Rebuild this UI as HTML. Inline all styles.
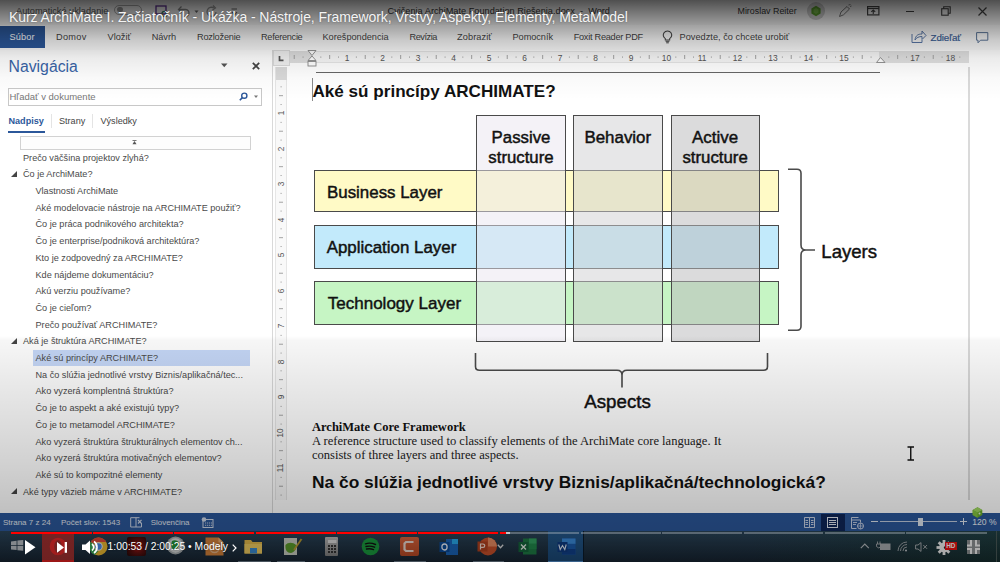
<!DOCTYPE html>
<html><head><meta charset="utf-8">
<style>
*{margin:0;padding:0;box-sizing:border-box}
html,body{width:1000px;height:562px;overflow:hidden;background:#fff}
body{position:relative;font-family:"Liberation Sans",sans-serif;color:#444}
.a{position:absolute}
.t{position:absolute;white-space:nowrap;line-height:1}
svg{position:absolute;overflow:visible}
</style></head><body>
<div class="a" style="left:0px;top:0px;width:1000px;height:25px;background:#f5f5f5"></div>
<div class="t" style="left:16.00px;top:6.71px;font-size:9.2px;color:#555;">Automatické ukladanie</div>
<div class="a" style="left:114px;top:4.5px;width:27.5px;height:10px;border:1px solid #aaa;border-radius:5px"></div>
<div class="a" style="left:117px;top:6.8px;width:5.5px;height:5.5px;background:#999;border-radius:50%"></div>
<svg style="left:155px;top:5px" width="14" height="12"><rect x="1" y="1" width="10" height="8" fill="none" stroke="#5c2d91" stroke-width="1.3"/><circle cx="9.5" cy="9" r="2.6" fill="none" stroke="#3a7a5a" stroke-width="1.2"/></svg>
<svg style="left:177px;top:5px" width="14" height="12"><path d="M2,4.5 H8.5 A3.5,3.5 0 0 1 8.5,11.5 H6" stroke="#888" stroke-width="1.3" fill="none"/><path d="M4.5,1.5 L1.5,4.5 L4.5,7.5" stroke="#888" stroke-width="1.3" fill="none"/></svg>
<svg style="left:194px;top:9.5px" width="5" height="4"><path d="M0.5,0.5 H4.5 L2.5,3 Z" fill="#666"/></svg>
<svg style="left:206px;top:5px" width="12" height="12"><path d="M8,3 A4.5,4.5 0 1 0 10,7" stroke="#999" stroke-width="1.3" fill="none"/><path d="M7,0.5 L9.5,3 L6.5,5" stroke="#999" stroke-width="1.2" fill="none"/></svg>
<svg style="left:231px;top:8px" width="8" height="8"><path d="M0.5,1 H6 M1,4 L3.5,7 L6,4" stroke="#666" stroke-width="1.1" fill="none"/></svg>
<div class="t" style="left:387.50px;top:6.71px;font-size:9.2px;color:#333;">Cvičenia ArchiMate Foundation Riešenia.docx&nbsp; - &nbsp;Word</div>
<div class="t" style="left:737.50px;top:6.97px;font-size:8.9px;color:#333;">Miroslav Reiter</div>
<div class="a" style="left:807px;top:2px;width:18px;height:18px;border-radius:50%;background:radial-gradient(circle,#cfcfcf 55%,#b8b8b8 100%)"></div>
<svg style="left:810px;top:5px" width="12" height="12"><polygon points="6,0.8 10.6,3.4 10.6,8.6 6,11.2 1.4,8.6 1.4,3.4" fill="#5a9c2e"/><polygon points="6,3 8.5,4.5 8.5,7.5 6,9 3.5,7.5 3.5,4.5" fill="#77b84a"/></svg>
<svg style="left:838px;top:4px" width="14" height="14"><path d="M1.5,12.5 L3,8 L9,2.5 L11.5,5 L5.5,10.8 Z" fill="none" stroke="#777" stroke-width="1"/><path d="M10.5,1 L12.5,0.5 M12,2.5 L13.5,2" stroke="#777" stroke-width="0.9"/></svg>
<svg style="left:867px;top:6px" width="13" height="10"><rect x="0.6" y="0.6" width="11.3" height="8.3" fill="none" stroke="#444" stroke-width="1.2"/><path d="M0.6,2.5 H11.9" stroke="#444" stroke-width="1.2"/><path d="M6.25,8 V4 M4.3,5.8 L6.25,3.9 L8.2,5.8" stroke="#444" stroke-width="1.1" fill="none"/></svg>
<div class="a" style="left:905.5px;top:11px;width:8.5px;height:1.2px;background:#444"></div>
<svg style="left:941px;top:6px" width="10" height="10"><rect x="0.7" y="2.7" width="6.5" height="6.5" fill="none" stroke="#444" stroke-width="1.1"/><path d="M2.7,2.7 V0.7 H9.2 V7.2 H7.2" fill="none" stroke="#444" stroke-width="1.1"/></svg>
<svg style="left:977.5px;top:6.5px" width="9" height="9"><path d="M0.5,0.5 L8.5,8.5 M8.5,0.5 L0.5,8.5" stroke="#444" stroke-width="1.2"/></svg>
<div class="a" style="left:0px;top:25px;width:1000px;height:25px;background:#fbfbfb"></div>
<div class="a" style="left:0px;top:25.5px;width:45px;height:22.5px;background:#2b579a"></div>
<div class="t" style="left:9.60px;top:33.41px;font-size:9.2px;color:#fff;letter-spacing:0.1px">Súbor</div>
<div class="t" style="left:56.00px;top:33.31px;font-size:9.2px;color:#444;letter-spacing:0.3px">Domov</div>
<div class="t" style="left:107.50px;top:33.31px;font-size:9.2px;color:#444;letter-spacing:0.016px">Vložiť</div>
<div class="t" style="left:151.70px;top:33.31px;font-size:9.2px;color:#444;letter-spacing:-0.05px">Návrh</div>
<div class="t" style="left:197.00px;top:33.31px;font-size:9.2px;color:#444;letter-spacing:-0.2px">Rozloženie</div>
<div class="t" style="left:261.00px;top:33.31px;font-size:9.2px;color:#444;letter-spacing:-0.3px">Referencie</div>
<div class="t" style="left:322.50px;top:33.31px;font-size:9.2px;color:#444;letter-spacing:-0.02px">Korešpondencia</div>
<div class="t" style="left:409.50px;top:33.31px;font-size:9.2px;color:#444;letter-spacing:-0.45px">Revízia</div>
<div class="t" style="left:457.00px;top:33.31px;font-size:9.2px;color:#444;letter-spacing:0.1px">Zobraziť</div>
<div class="t" style="left:512.50px;top:33.31px;font-size:9.2px;color:#444;letter-spacing:-0.05px">Pomocník</div>
<div class="t" style="left:573.70px;top:33.31px;font-size:9.2px;color:#444;letter-spacing:-0.27px">Foxit Reader PDF</div>
<div class="t" style="left:679.50px;top:33.31px;font-size:9.2px;color:#444;letter-spacing:0.026px">Povedzte, čo chcete urobiť</div>
<svg style="left:661.5px;top:30px" width="11" height="14"><path d="M3.3,8.6 C1.2,7 1,4.5 2,2.8 C3.6,0.4 7.4,0.4 9,2.8 C10,4.5 9.8,7 7.7,8.6 V10 H3.3 Z" fill="none" stroke="#444" stroke-width="1.05"/><path d="M3.6,11.3 H7.4 M4.2,12.8 H6.8" stroke="#444" stroke-width="1"/></svg>
<svg style="left:911px;top:29px" width="16" height="15"><path d="M1,5 V13.5 H11 V11" fill="none" stroke="#5a78a8" stroke-width="1"/><path d="M4,11 C4.5,6.5 7,5 11,5 V2 L15,6.5 L11,10.5 V7.5 C8,7.5 5.5,8.5 4,11 Z" fill="none" stroke="#5a78a8" stroke-width="1"/></svg>
<div class="t" style="left:930.50px;top:32.90px;font-size:9.8px;color:#3a5f98;letter-spacing:-0.1px;-webkit-text-stroke:0.2px #3a5f98">Zdieľať</div>
<svg style="left:976px;top:32px" width="13" height="12"><path d="M0.6,0.6 H11.8 V8.2 H4.5 L2,10.8 V8.2 H0.6 Z" fill="none" stroke="#5a7498" stroke-width="1"/></svg>
<div class="a" style="left:0px;top:50px;width:273px;height:463px;background:#fff;border-right:1px solid #d9d9d9"></div>
<div class="t" style="left:8.50px;top:58.83px;font-size:15.8px;color:#3863a6;">Navigácia</div>
<div class="a" style="left:8px;top:87.5px;width:253.5px;height:18px;border:1px solid #c8c8c8;background:#fff"></div>
<div class="t" style="left:9.50px;top:91.76px;font-size:9.5px;color:#777;">Hľadať v dokumente</div>
<div class="t" style="left:8.50px;top:117.00px;font-size:9.1px;color:#2b579a;font-weight:bold;">Nadpisy</div>
<div class="a" style="left:8px;top:130.5px;width:37px;height:2.3px;background:#2b579a"></div>
<div class="a" style="left:50.5px;top:114px;width:1px;height:14px;background:#e4e4e4"></div>
<div class="t" style="left:59.00px;top:117.00px;font-size:9.1px;color:#444;">Strany</div>
<div class="a" style="left:92px;top:114px;width:1px;height:14px;background:#e4e4e4"></div>
<div class="t" style="left:100.50px;top:117.00px;font-size:9.1px;color:#444;">Výsledky</div>
<div class="a" style="left:20px;top:135.5px;width:230.5px;height:14px;border:1px solid #d2d2d2;background:#fdfdfd"></div>
<svg style="left:132px;top:140px" width="5" height="5"><path d="M0.5,4.2 L2.5,1 L4.5,4.2 Z" fill="#555"/><rect x="0.5" y="0" width="4" height="0.8" fill="#555"/></svg>
<svg style="left:220.5px;top:62.5px" width="7" height="5"><path d="M0,0.5 H6.5 L3.25,4.3 Z" fill="#555"/></svg>
<svg style="left:252px;top:61.5px" width="8" height="8"><path d="M0.8,0.8 L7.2,7.2 M7.2,0.8 L0.8,7.2" stroke="#444" stroke-width="1.7"/></svg>
<svg style="left:239px;top:92px" width="9" height="9"><circle cx="5.3" cy="3.7" r="2.6" fill="none" stroke="#2b579a" stroke-width="1.4"/><path d="M3.4,5.6 L0.8,8.2" stroke="#2b579a" stroke-width="1.6"/></svg>
<svg style="left:254px;top:95px" width="5" height="4"><path d="M0,0.5 H4 L2,3 Z" fill="#777"/></svg>
<div class="t" style="left:23.00px;top:153.65px;font-size:9.15px;color:#4a4a4a;">Prečo väčšina projektov zlyhá?</div>
<svg style="left:11px;top:170.6px" width="7" height="7"><polygon points="6,0 6,6 0,6" fill="#444"/></svg>
<div class="t" style="left:23.00px;top:170.35px;font-size:9.15px;color:#4a4a4a;">Čo je ArchiMate?</div>
<div class="t" style="left:35.50px;top:187.05px;font-size:9.15px;color:#4a4a4a;">Vlastnosti ArchiMate</div>
<div class="t" style="left:35.50px;top:203.75px;font-size:9.15px;color:#4a4a4a;">Aké modelovacie nástroje na ARCHIMATE použiť?</div>
<div class="t" style="left:35.50px;top:220.45px;font-size:9.15px;color:#4a4a4a;">Čo je práca podnikového architekta?</div>
<div class="t" style="left:35.50px;top:237.15px;font-size:9.15px;color:#4a4a4a;">Čo je enterprise/podniková architektúra?</div>
<div class="t" style="left:35.50px;top:253.85px;font-size:9.15px;color:#4a4a4a;">Kto je zodpovedný za ARCHIMATE?</div>
<div class="t" style="left:35.50px;top:270.55px;font-size:9.15px;color:#4a4a4a;">Kde nájdeme dokumentáciu?</div>
<div class="t" style="left:35.50px;top:287.25px;font-size:9.15px;color:#4a4a4a;">Akú verziu používame?</div>
<div class="t" style="left:35.50px;top:303.95px;font-size:9.15px;color:#4a4a4a;">Čo je cieľom?</div>
<div class="t" style="left:35.50px;top:320.65px;font-size:9.15px;color:#4a4a4a;">Prečo používať ARCHIMATE?</div>
<svg style="left:11px;top:337.6px" width="7" height="7"><polygon points="6,0 6,6 0,6" fill="#444"/></svg>
<div class="t" style="left:23.00px;top:337.35px;font-size:9.15px;color:#4a4a4a;">Aká je štruktúra ARCHIMATE?</div>
<div class="a" style="left:33px;top:350.09999999999997px;width:216.6px;height:15.7px;background:#c6d8f8"></div>
<div class="t" style="left:35.50px;top:354.05px;font-size:9.15px;color:#4a4a4a;">Aké sú princípy ARCHIMATE?</div>
<div class="t" style="left:35.50px;top:370.75px;font-size:9.15px;color:#4a4a4a;">Na čo slúžia jednotlivé vrstvy Biznis/aplikačná/tec...</div>
<div class="t" style="left:35.50px;top:387.45px;font-size:9.15px;color:#4a4a4a;">Ako vyzerá komplentná štruktúra?</div>
<div class="t" style="left:35.50px;top:404.15px;font-size:9.15px;color:#4a4a4a;">Čo je to aspekt a aké existujú typy?</div>
<div class="t" style="left:35.50px;top:420.85px;font-size:9.15px;color:#4a4a4a;">Čo je to metamodel ARCHIMATE?</div>
<div class="t" style="left:35.50px;top:437.55px;font-size:9.15px;color:#4a4a4a;">Ako vyzerá štruktúra štrukturálnych elementov ch...</div>
<div class="t" style="left:35.50px;top:454.25px;font-size:9.15px;color:#4a4a4a;">Ako vyzerá štruktúra motivačných elementov?</div>
<div class="t" style="left:35.50px;top:470.95px;font-size:9.15px;color:#4a4a4a;">Aké sú to kompozitné elementy</div>
<svg style="left:11px;top:487.9px" width="7" height="7"><polygon points="6,0 6,6 0,6" fill="#444"/></svg>
<div class="t" style="left:23.00px;top:487.65px;font-size:9.15px;color:#4a4a4a;">Aké typy väzieb máme v ARCHIMATE?</div>
<div class="a" style="left:274px;top:50px;width:726px;height:463px;background:#fff"></div>
<div class="a" style="left:968.2px;top:67px;width:1.4px;height:433px;background:#dadada"></div>
<div class="a" style="left:272.8px;top:49.6px;width:17.1px;height:16px;background:#f0f0f0;border:1px solid #dadada"></div>
<svg style="left:278px;top:53px" width="8" height="8"><path d="M1.5,3 V7.3 H5.5" stroke="#555" stroke-width="1.7" fill="none"/></svg>
<div class="a" style="left:290px;top:51px;width:679px;height:11.6px;background:#f7f7f7;border-top:1px solid #e6e6e6;border-bottom:1px solid #e6e6e6"></div>
<div class="a" style="left:290px;top:51px;width:21.5px;height:11.6px;background:#dedede"></div>
<div class="a" style="left:878.5px;top:51px;width:90.5px;height:11.6px;background:#e0e0e0"></div>
<svg style="left:290px;top:51px" width="679" height="12"><rect x="3.75" y="4" width="0.9" height="4" fill="#9a9a9a"/><rect x="12.62" y="5.5" width="0.9" height="1.2" fill="#9a9a9a"/><rect x="30.38" y="5.5" width="0.9" height="1.2" fill="#9a9a9a"/><rect x="39.25" y="4" width="0.9" height="4" fill="#9a9a9a"/><rect x="48.12" y="5.5" width="0.9" height="1.2" fill="#9a9a9a"/><rect x="65.88" y="5.5" width="0.9" height="1.2" fill="#9a9a9a"/><rect x="74.75" y="4" width="0.9" height="4" fill="#9a9a9a"/><rect x="83.62" y="5.5" width="0.9" height="1.2" fill="#9a9a9a"/><rect x="101.38" y="5.5" width="0.9" height="1.2" fill="#9a9a9a"/><rect x="110.25" y="4" width="0.9" height="4" fill="#9a9a9a"/><rect x="119.12" y="5.5" width="0.9" height="1.2" fill="#9a9a9a"/><rect x="136.88" y="5.5" width="0.9" height="1.2" fill="#9a9a9a"/><rect x="145.75" y="4" width="0.9" height="4" fill="#9a9a9a"/><rect x="154.62" y="5.5" width="0.9" height="1.2" fill="#9a9a9a"/><rect x="172.38" y="5.5" width="0.9" height="1.2" fill="#9a9a9a"/><rect x="181.25" y="4" width="0.9" height="4" fill="#9a9a9a"/><rect x="190.12" y="5.5" width="0.9" height="1.2" fill="#9a9a9a"/><rect x="207.88" y="5.5" width="0.9" height="1.2" fill="#9a9a9a"/><rect x="216.75" y="4" width="0.9" height="4" fill="#9a9a9a"/><rect x="225.62" y="5.5" width="0.9" height="1.2" fill="#9a9a9a"/><rect x="243.38" y="5.5" width="0.9" height="1.2" fill="#9a9a9a"/><rect x="252.25" y="4" width="0.9" height="4" fill="#9a9a9a"/><rect x="261.12" y="5.5" width="0.9" height="1.2" fill="#9a9a9a"/><rect x="278.88" y="5.5" width="0.9" height="1.2" fill="#9a9a9a"/><rect x="287.75" y="4" width="0.9" height="4" fill="#9a9a9a"/><rect x="296.62" y="5.5" width="0.9" height="1.2" fill="#9a9a9a"/><rect x="314.38" y="5.5" width="0.9" height="1.2" fill="#9a9a9a"/><rect x="323.25" y="4" width="0.9" height="4" fill="#9a9a9a"/><rect x="332.12" y="5.5" width="0.9" height="1.2" fill="#9a9a9a"/><rect x="349.88" y="5.5" width="0.9" height="1.2" fill="#9a9a9a"/><rect x="358.75" y="4" width="0.9" height="4" fill="#9a9a9a"/><rect x="367.62" y="5.5" width="0.9" height="1.2" fill="#9a9a9a"/><rect x="385.38" y="5.5" width="0.9" height="1.2" fill="#9a9a9a"/><rect x="394.25" y="4" width="0.9" height="4" fill="#9a9a9a"/><rect x="403.12" y="5.5" width="0.9" height="1.2" fill="#9a9a9a"/><rect x="420.88" y="5.5" width="0.9" height="1.2" fill="#9a9a9a"/><rect x="429.75" y="4" width="0.9" height="4" fill="#9a9a9a"/><rect x="438.62" y="5.5" width="0.9" height="1.2" fill="#9a9a9a"/><rect x="456.38" y="5.5" width="0.9" height="1.2" fill="#9a9a9a"/><rect x="465.25" y="4" width="0.9" height="4" fill="#9a9a9a"/><rect x="474.12" y="5.5" width="0.9" height="1.2" fill="#9a9a9a"/><rect x="491.88" y="5.5" width="0.9" height="1.2" fill="#9a9a9a"/><rect x="500.75" y="4" width="0.9" height="4" fill="#9a9a9a"/><rect x="509.62" y="5.5" width="0.9" height="1.2" fill="#9a9a9a"/><rect x="527.38" y="5.5" width="0.9" height="1.2" fill="#9a9a9a"/><rect x="536.25" y="4" width="0.9" height="4" fill="#9a9a9a"/><rect x="545.12" y="5.5" width="0.9" height="1.2" fill="#9a9a9a"/><rect x="562.88" y="5.5" width="0.9" height="1.2" fill="#9a9a9a"/><rect x="571.75" y="4" width="0.9" height="4" fill="#9a9a9a"/><rect x="580.62" y="5.5" width="0.9" height="1.2" fill="#9a9a9a"/><rect x="598.38" y="5.5" width="0.9" height="1.2" fill="#9a9a9a"/><rect x="607.25" y="4" width="0.9" height="4" fill="#9a9a9a"/><rect x="616.12" y="5.5" width="0.9" height="1.2" fill="#9a9a9a"/><rect x="633.88" y="5.5" width="0.9" height="1.2" fill="#9a9a9a"/><rect x="642.75" y="4" width="0.9" height="4" fill="#9a9a9a"/><rect x="651.62" y="5.5" width="0.9" height="1.2" fill="#9a9a9a"/><rect x="669.38" y="5.5" width="0.9" height="1.2" fill="#9a9a9a"/></svg>
<div class="t" style="left:344.50px;top:54.09px;font-size:8.4px;color:#555;width:5.0px;text-align:center">1</div>
<div class="t" style="left:380.00px;top:54.09px;font-size:8.4px;color:#555;width:5.0px;text-align:center">2</div>
<div class="t" style="left:415.50px;top:54.09px;font-size:8.4px;color:#555;width:5.0px;text-align:center">3</div>
<div class="t" style="left:451.00px;top:54.09px;font-size:8.4px;color:#555;width:5.0px;text-align:center">4</div>
<div class="t" style="left:486.50px;top:54.09px;font-size:8.4px;color:#555;width:5.0px;text-align:center">5</div>
<div class="t" style="left:522.00px;top:54.09px;font-size:8.4px;color:#555;width:5.0px;text-align:center">6</div>
<div class="t" style="left:557.50px;top:54.09px;font-size:8.4px;color:#555;width:5.0px;text-align:center">7</div>
<div class="t" style="left:593.00px;top:54.09px;font-size:8.4px;color:#555;width:5.0px;text-align:center">8</div>
<div class="t" style="left:628.50px;top:54.09px;font-size:8.4px;color:#555;width:5.0px;text-align:center">9</div>
<div class="t" style="left:661.50px;top:54.09px;font-size:8.4px;color:#555;width:10.0px;text-align:center">10</div>
<div class="t" style="left:697.00px;top:54.09px;font-size:8.4px;color:#555;width:10.0px;text-align:center">11</div>
<div class="t" style="left:732.50px;top:54.09px;font-size:8.4px;color:#555;width:10.0px;text-align:center">12</div>
<div class="t" style="left:768.00px;top:54.09px;font-size:8.4px;color:#555;width:10.0px;text-align:center">13</div>
<div class="t" style="left:803.50px;top:54.09px;font-size:8.4px;color:#555;width:10.0px;text-align:center">14</div>
<div class="t" style="left:839.00px;top:54.09px;font-size:8.4px;color:#555;width:10.0px;text-align:center">15</div>
<div class="t" style="left:910.00px;top:54.09px;font-size:8.4px;color:#555;width:10.0px;text-align:center">17</div>
<div class="t" style="left:945.50px;top:54.09px;font-size:8.4px;color:#555;width:10.0px;text-align:center">18</div>
<svg style="left:307px;top:49.5px" width="10" height="18"><path d="M1,0.5 H9 L5,5.5 Z" fill="#fff" stroke="#888" stroke-width="0.9"/><path d="M5,6 L9,10.5 H1 Z" fill="#fff" stroke="#888" stroke-width="0.9"/><rect x="1" y="11.5" width="8" height="4.5" fill="#fff" stroke="#888" stroke-width="0.9"/></svg>
<svg style="left:876px;top:57px" width="10" height="6"><path d="M4.5,0.5 L9,5.5 H0.5 Z" fill="#fff" stroke="#888" stroke-width="0.9"/></svg>
<div class="a" style="left:274.7px;top:67px;width:12.3px;height:433px;background:#f9f9f9;border-left:1px solid #e6e6e6;border-right:1px solid #e6e6e6"></div>
<div class="a" style="left:275.5px;top:67px;width:11px;height:12.5px;background:#d9d9d9"></div>
<svg style="left:275px;top:67px" width="12" height="433"><rect x="5.5" y="19.38" width="1.2" height="0.9" fill="#9a9a9a"/><rect x="4" y="28.25" width="4" height="0.9" fill="#9a9a9a"/><rect x="5.5" y="37.12" width="1.2" height="0.9" fill="#9a9a9a"/><rect x="5.5" y="54.88" width="1.2" height="0.9" fill="#9a9a9a"/><rect x="4" y="63.75" width="4" height="0.9" fill="#9a9a9a"/><rect x="5.5" y="72.62" width="1.2" height="0.9" fill="#9a9a9a"/><rect x="5.5" y="90.38" width="1.2" height="0.9" fill="#9a9a9a"/><rect x="4" y="99.25" width="4" height="0.9" fill="#9a9a9a"/><rect x="5.5" y="108.12" width="1.2" height="0.9" fill="#9a9a9a"/><rect x="5.5" y="125.88" width="1.2" height="0.9" fill="#9a9a9a"/><rect x="4" y="134.75" width="4" height="0.9" fill="#9a9a9a"/><rect x="5.5" y="143.62" width="1.2" height="0.9" fill="#9a9a9a"/><rect x="5.5" y="161.38" width="1.2" height="0.9" fill="#9a9a9a"/><rect x="4" y="170.25" width="4" height="0.9" fill="#9a9a9a"/><rect x="5.5" y="179.12" width="1.2" height="0.9" fill="#9a9a9a"/><rect x="5.5" y="196.88" width="1.2" height="0.9" fill="#9a9a9a"/><rect x="4" y="205.75" width="4" height="0.9" fill="#9a9a9a"/><rect x="5.5" y="214.62" width="1.2" height="0.9" fill="#9a9a9a"/><rect x="5.5" y="232.38" width="1.2" height="0.9" fill="#9a9a9a"/><rect x="4" y="241.25" width="4" height="0.9" fill="#9a9a9a"/><rect x="5.5" y="250.12" width="1.2" height="0.9" fill="#9a9a9a"/><rect x="5.5" y="267.88" width="1.2" height="0.9" fill="#9a9a9a"/><rect x="4" y="276.75" width="4" height="0.9" fill="#9a9a9a"/><rect x="5.5" y="285.62" width="1.2" height="0.9" fill="#9a9a9a"/><rect x="5.5" y="303.38" width="1.2" height="0.9" fill="#9a9a9a"/><rect x="4" y="312.25" width="4" height="0.9" fill="#9a9a9a"/><rect x="5.5" y="321.12" width="1.2" height="0.9" fill="#9a9a9a"/><rect x="5.5" y="338.88" width="1.2" height="0.9" fill="#9a9a9a"/><rect x="4" y="347.75" width="4" height="0.9" fill="#9a9a9a"/><rect x="5.5" y="356.62" width="1.2" height="0.9" fill="#9a9a9a"/><rect x="5.5" y="374.38" width="1.2" height="0.9" fill="#9a9a9a"/><rect x="4" y="383.25" width="4" height="0.9" fill="#9a9a9a"/><rect x="5.5" y="392.12" width="1.2" height="0.9" fill="#9a9a9a"/><rect x="5.5" y="409.88" width="1.2" height="0.9" fill="#9a9a9a"/><rect x="4" y="418.75" width="4" height="0.9" fill="#9a9a9a"/><rect x="5.5" y="427.62" width="1.2" height="0.9" fill="#9a9a9a"/></svg>
<div class="t" style="left:278.50px;top:109.00px;width:5.0px;height:8px;text-align:center;font-size:8.2px;color:#555;transform:rotate(-90deg)">1</div>
<div class="t" style="left:278.50px;top:144.50px;width:5.0px;height:8px;text-align:center;font-size:8.2px;color:#555;transform:rotate(-90deg)">2</div>
<div class="t" style="left:278.50px;top:180.00px;width:5.0px;height:8px;text-align:center;font-size:8.2px;color:#555;transform:rotate(-90deg)">3</div>
<div class="t" style="left:278.50px;top:215.50px;width:5.0px;height:8px;text-align:center;font-size:8.2px;color:#555;transform:rotate(-90deg)">4</div>
<div class="t" style="left:278.50px;top:251.00px;width:5.0px;height:8px;text-align:center;font-size:8.2px;color:#555;transform:rotate(-90deg)">5</div>
<div class="t" style="left:278.50px;top:286.50px;width:5.0px;height:8px;text-align:center;font-size:8.2px;color:#555;transform:rotate(-90deg)">6</div>
<div class="t" style="left:278.50px;top:322.00px;width:5.0px;height:8px;text-align:center;font-size:8.2px;color:#555;transform:rotate(-90deg)">7</div>
<div class="t" style="left:278.50px;top:357.50px;width:5.0px;height:8px;text-align:center;font-size:8.2px;color:#555;transform:rotate(-90deg)">8</div>
<div class="t" style="left:278.50px;top:393.00px;width:5.0px;height:8px;text-align:center;font-size:8.2px;color:#555;transform:rotate(-90deg)">9</div>
<div class="t" style="left:276.00px;top:428.50px;width:10.0px;height:8px;text-align:center;font-size:8.2px;color:#555;transform:rotate(-90deg)">10</div>
<div class="t" style="left:276.00px;top:464.00px;width:10.0px;height:8px;text-align:center;font-size:8.2px;color:#555;transform:rotate(-90deg)">11</div>
<div class="a" style="left:316px;top:71.8px;width:564px;height:1px;background:#666"></div>
<div class="a" style="left:311.6px;top:78px;width:1.1px;height:23px;background:#8a8a8a"></div>
<div class="t" style="left:312.50px;top:82.52px;font-size:17.1px;color:#111;font-weight:bold;">Aké sú princípy ARCHIMATE?</div>
<div class="a" style="left:314.3px;top:169.6px;width:464.4px;height:42.80000000000001px;background:#fffac6;border:1px solid #4a4a4a"></div>
<div class="a" style="left:314.3px;top:225.4px;width:464.4px;height:43.400000000000006px;background:#c2eafb;border:1px solid #4a4a4a"></div>
<div class="a" style="left:314.3px;top:281.2px;width:464.4px;height:43.80000000000001px;background:#c6f5c4;border:1px solid #4a4a4a"></div>
<div class="a" style="left:476.3px;top:115px;width:89.49999999999994px;height:226.7px;background:rgba(233,229,239,0.5);border:1px solid #4a4a4a"></div>
<div class="a" style="left:573px;top:115px;width:89.70000000000005px;height:226.7px;background:rgba(208,208,210,0.5);border:1px solid #4a4a4a"></div>
<div class="a" style="left:670.6px;top:115px;width:89.10000000000002px;height:226.7px;background:rgba(186,186,188,0.52);border:1px solid #4a4a4a"></div>
<div class="t" style="left:327.00px;top:184.99px;font-size:16.9px;color:#111;-webkit-text-stroke:0.45px #111">Business Layer</div>
<div class="t" style="left:326.70px;top:239.69px;font-size:16.9px;color:#111;-webkit-text-stroke:0.45px #111">Application Layer</div>
<div class="t" style="left:327.80px;top:295.41px;font-size:17.0px;color:#111;-webkit-text-stroke:0.45px #111">Technology Layer</div>
<div class="t" style="left:461.00px;top:130.08px;width:120px;text-align:center;font-size:16.8px;color:#111;-webkit-text-stroke:0.45px #111">Passive</div>
<div class="t" style="left:461.00px;top:149.58px;width:120px;text-align:center;font-size:16.8px;color:#111;-webkit-text-stroke:0.45px #111">structure</div>
<div class="t" style="left:557.80px;top:129.99px;width:120px;text-align:center;font-size:16.9px;color:#111;-webkit-text-stroke:0.45px #111">Behavior</div>
<div class="t" style="left:655.10px;top:129.99px;width:120px;text-align:center;font-size:16.9px;color:#111;-webkit-text-stroke:0.45px #111">Active</div>
<div class="t" style="left:655.10px;top:149.58px;width:120px;text-align:center;font-size:16.8px;color:#111;-webkit-text-stroke:0.45px #111">structure</div>
<svg style="left:780px;top:160px" width="50" height="180"><path d="M8,9.2 H17 Q21,9.2 21,13.2 V85 Q21,90 26,90 H35 M26,90 Q21,90 21,95 V166.3 Q21,170.3 17,170.3 H8" stroke="#4a4a4a" stroke-width="1.6" fill="none"/></svg>
<div class="t" style="left:821.30px;top:242.66px;font-size:18.6px;color:#111;-webkit-text-stroke:0.45px #111">Layers</div>
<svg style="left:470px;top:345px" width="310" height="50"><path d="M5.5,8 V21.5 Q5.5,25.3 9.5,25.3 H147 Q152,25.3 152,30 V42.5 M152,30 Q152,25.3 157,25.3 H293.5 Q297.5,25.3 297.5,21.5 V8" stroke="#4a4a4a" stroke-width="1.6" fill="none"/></svg>
<div class="t" style="left:584.30px;top:393.47px;font-size:18.7px;color:#111;-webkit-text-stroke:0.45px #111">Aspects</div>
<div class="t" style="left:312.00px;top:420.53px;font-size:12.5px;color:#111;font-weight:bold;font-family:'Liberation Serif',serif;">ArchiMate Core Framework</div>
<div class="t" style="left:312.00px;top:434.89px;font-size:12.55px;color:#222;font-family:'Liberation Serif',serif;">A reference structure used to classify elements of the ArchiMate core language. It</div>
<div class="t" style="left:312.00px;top:449.09px;font-size:12.55px;color:#222;font-family:'Liberation Serif',serif;">consists of three layers and three aspects.</div>
<div class="t" style="left:312.00px;top:474.31px;font-size:17.35px;color:#111;font-weight:bold;">Na čo slúžia jednotlivé vrstvy Biznis/aplikačná/technologická?</div>
<svg style="left:906px;top:446px" width="10" height="16"><path d="M1.5,1 H8 M4.75,1 V14 M1.5,14 H8" stroke="#111" stroke-width="1.4" fill="none"/></svg>
<div class="a" style="left:0px;top:513px;width:1000px;height:18px;background:#2b579a"></div>
<div class="t" style="left:3.00px;top:518.83px;font-size:8.0px;color:#e6ecf5;">Strana 7 z 24</div>
<div class="t" style="left:61.00px;top:518.83px;font-size:8.0px;color:#e6ecf5;">Počet slov: 1543</div>
<svg style="left:129.5px;top:516.5px" width="13" height="11"><path d="M0.7,0.7 H6 V10 H0.7 Z M6,0.7 H9.5 M6,10 H11.5 V6" fill="none" stroke="#cfd8e8" stroke-width="1"/><path d="M8,3 L11.5,6.5 M11.5,3 L8,6.5" stroke="#cfd8e8" stroke-width="1.1"/></svg>
<div class="t" style="left:150.70px;top:518.87px;font-size:7.95px;color:#e6ecf5;">Slovenčina</div>
<svg style="left:200.5px;top:516.5px" width="13" height="11"><rect x="2" y="2.5" width="10" height="8" fill="none" stroke="#cfd8e8" stroke-width="1"/><circle cx="3" cy="2.5" r="2.3" fill="#cfd8e8"/><path d="M4,6 H11 M4,8.3 H11" stroke="#cfd8e8" stroke-width="0.9" stroke-dasharray="1.2 0.8"/></svg>
<div class="a" style="left:821px;top:513.8px;width:24px;height:16.8px;background:#0f2658"></div>
<svg style="left:804px;top:517px" width="12" height="11"><path d="M0.5,0.5 H5.5 V10.5 H0.5 Z M5.5,0.5 H10.5 V10.5 H5.5" fill="none" stroke="#c9d3e6" stroke-width="1"/><path d="M1.5,3.5 H4 M1.5,5.5 H4 M1.5,7.5 H4 M7,3.5 H9.5 M7,5.5 H9.5 M7,7.5 H9.5" stroke="#c9d3e6" stroke-width="1"/></svg>
<svg style="left:827px;top:517px" width="12" height="12"><rect x="0.5" y="0.5" width="10" height="10" fill="none" stroke="#e3e9f3" stroke-width="1"/><path d="M2,3.5 H9 M2,5.5 H9 M2,7.5 H9" stroke="#e3e9f3" stroke-width="1"/></svg>
<svg style="left:851px;top:517px" width="13" height="12"><path d="M7.5,0.5 H0.5 V11.5 H5.5 M0.5,3 H9.5 V5.5" fill="none" stroke="#c9d3e6" stroke-width="1"/><path d="M2,5.5 H6 M2,7.5 H5" stroke="#c9d3e6" stroke-width="0.9"/><circle cx="9.5" cy="9" r="3" fill="none" stroke="#c9d3e6" stroke-width="1"/><path d="M6.5,9 H12.5 M9.5,6 V12" stroke="#c9d3e6" stroke-width="0.7"/></svg>
<div class="a" style="left:871px;top:520.6px;width:6.5px;height:1.8px;background:#dfe6f0"></div>
<div class="a" style="left:880.3px;top:520.8px;width:76.7px;height:1.5px;background:#c2cde0"></div>
<div class="a" style="left:917.7px;top:517.6px;width:5.7px;height:8.8px;background:#dfe6f0"></div>
<div class="a" style="left:960px;top:520.8px;width:6.5px;height:1.5px;background:#e3e9f3"></div>
<div class="a" style="left:962.5px;top:518.3px;width:1.5px;height:6.5px;background:#e3e9f3"></div>
<div class="t" style="left:972.30px;top:518.12px;font-size:8.6px;color:#eef2f8;">120 %</div>
<svg style="left:972px;top:507px" width="11" height="11"><polygon points="5.5,0.3 10.3,3 10.3,8 5.5,10.7 0.7,8 0.7,3" fill="#6aae2a"/><polygon points="5.5,0.3 10.3,3 5.5,5.6 0.7,3" fill="#a0d860"/><polygon points="0.7,3 5.5,5.6 5.5,10.7 0.7,8" fill="#84c440"/><circle cx="7.5" cy="6.5" r="1" fill="#e8f0e0"/></svg>
<div class="a" style="left:0px;top:531px;width:1000px;height:31px;background:linear-gradient(90deg,rgba(0,0,0,0) 75%,rgba(20,60,40,0.4) 100%),linear-gradient(#2a4459,#162330)"></div>
<div class="a" style="left:238px;top:560.5px;width:33px;height:1.5px;background:#6a7a88"></div>
<div class="a" style="left:277px;top:560.5px;width:28px;height:1.5px;background:#6a7a88"></div>
<div class="a" style="left:394px;top:560.5px;width:32px;height:1.5px;background:#6a7a88"></div>
<div class="a" style="left:473px;top:560.5px;width:31px;height:1.5px;background:#6a7a88"></div>
<div class="a" style="left:548px;top:560.5px;width:35px;height:1.5px;background:#8ab0d8"></div>
<div class="a" style="left:42.3px;top:534px;width:31.5px;height:28px;background:#a03030"></div>
<div class="a" style="left:42.3px;top:560.3px;width:31.5px;height:1.7px;background:#e02020"></div>
<svg style="left:49px;top:537px" width="18" height="19"><ellipse cx="9" cy="9.5" rx="8.3" ry="8.8" fill="#e42a2a"/><ellipse cx="9" cy="9.5" rx="3.8" ry="6.4" fill="#a03030"/></svg>
<svg style="left:11.4px;top:539.8px" width="13" height="11"><path d="M0,1.4 L5.6,0.7 V5 H0 Z M6.4,0.6 L12.2,0 V5 H6.4 Z M0,5.8 H5.6 V10 L0,9.4 Z M6.4,5.8 H12.2 V10.8 L6.4,10.2 Z" fill="#b8bec4"/></svg>
<svg style="left:89px;top:537px" width="19" height="19"><circle cx="9.5" cy="9.5" r="9" fill="#eab830"/><path d="M9.5,0.5 A9,9 0 0 1 17.3,5 H9.5 A4.5,4.5 0 0 0 5.6,7.3 L1.7,5 A9,9 0 0 1 9.5,0.5 Z" fill="#e04838"/><path d="M1.7,5 L5.6,7.3 A4.5,4.5 0 0 0 9.5,14 L5.6,18 A9,9 0 0 1 1.7,5 Z" fill="#3aaa58"/><circle cx="9.5" cy="9.5" r="4.2" fill="#f0f0f0"/><circle cx="9.5" cy="9.5" r="3.2" fill="#4a8ae8"/></svg>
<div class="a" style="left:127px;top:537px;width:18.6px;height:18.6px;background:radial-gradient(circle at 55% 50%,#c02020 0%,#601010 45%,#200808 100%);border-radius:2px"></div>
<svg style="left:166px;top:536px" width="19" height="19"><circle cx="9.5" cy="9.5" r="9" fill="#a8aeb0"/><circle cx="9.5" cy="9.5" r="7.2" fill="#d8dcdc"/><path d="M6,5 C8,3.5 12,4 13,7 C13.5,9.5 12.5,12 10,13 C8,13.8 6,13 5.5,11 C5,9 5.5,6.5 6,5 Z" fill="#2a9a3a"/></svg>
<svg style="left:205px;top:537px" width="19" height="19"><path d="M0.5,0.5 H13.5 L18.5,5.5 V18.5 H0.5 Z" fill="#d4823a"/><path d="M13.5,0.5 V5.5 H18.5 Z" fill="#f0b070"/><circle cx="9.5" cy="11" r="4.5" fill="none" stroke="#e8c8a8" stroke-width="1.5" opacity="0.7"/></svg>
<svg style="left:244px;top:539px" width="19" height="15"><path d="M0.5,1 H7 L8.5,3 H18 V14.5 H0.5 Z" fill="#e2b84a"/><rect x="0.5" y="5" width="17.5" height="9.5" fill="#f0cc60"/><rect x="6" y="9" width="7" height="5.5" fill="#3a8ad0"/></svg>
<svg style="left:283px;top:537px" width="20" height="19"><path d="M1,1 H14 V18 H1 Z" fill="#c8ccc0"/><path d="M2.5,8 C5,5 10,5 13,8 C14,11 12,15 8,16 C4,16 2,13 2.5,8 Z" fill="#5a9a2a"/><path d="M11,13 L18.5,2" stroke="#b89a30" stroke-width="1.8"/></svg>
<div class="a" style="left:325px;top:537px;width:13.4px;height:19px;background:linear-gradient(#b8b8b8,#808080);border-radius:1px"></div>
<svg style="left:326.5px;top:538.5px" width="11" height="16"><rect x="1" y="1" width="8.5" height="3" fill="#dadada"/><rect x="1" y="6" width="2" height="2" fill="#333"/><rect x="4" y="6" width="2" height="2" fill="#333"/><rect x="7" y="6" width="2" height="2" fill="#333"/><rect x="1" y="9" width="2" height="2" fill="#333"/><rect x="4" y="9" width="2" height="2" fill="#333"/><rect x="7" y="9" width="2" height="2" fill="#333"/><rect x="1" y="12" width="2" height="2" fill="#333"/><rect x="4" y="12" width="2" height="2" fill="#333"/><rect x="7" y="12" width="2" height="2" fill="#333"/></svg>
<svg style="left:361px;top:537px" width="19" height="19"><circle cx="9.5" cy="9.5" r="8.8" fill="#1a9a3e"/><path d="M4.5,6.8 C7.5,5.8 11,6 14.5,7.5 M5,9.5 C7.8,8.8 10.6,9 13.6,10.2 M5.5,12 C8,11.5 10.2,11.6 12.5,12.6" stroke="#111" stroke-width="1.4" fill="none" stroke-linecap="round"/></svg>
<div class="a" style="left:400px;top:537px;width:19px;height:19px;background:linear-gradient(#d8623a,#b84a26);border-radius:2px"></div>
<svg style="left:403px;top:540px" width="13" height="13"><path d="M10.5,2 H3 L1.5,3.5 V9.5 L3,11 H10.5" stroke="#e8d8d0" stroke-width="2.2" fill="none"/></svg>
<svg style="left:439px;top:538px" width="20" height="18"><rect x="7" y="1" width="12" height="16" fill="#1a64b8"/><rect x="13" y="1" width="6" height="5" fill="#28a8ea"/><rect x="0.5" y="4" width="10" height="10" fill="#0a4a98"/><ellipse cx="5.5" cy="9" rx="2.6" ry="3" fill="none" stroke="#e8eef8" stroke-width="1.3"/></svg>
<svg style="left:477px;top:537px" width="21" height="20"><circle cx="11" cy="9.5" r="9" fill="#c8502a"/><path d="M11,0.5 A9,9 0 0 1 20,9.5 H11 Z" fill="#e88a60"/><rect x="0.5" y="4.5" width="10" height="10" fill="#b0401e"/><path d="M3.5,12.5 V7 H6 A1.7,1.7 0 0 1 6,10.4 H3.5" stroke="#f4dcd0" stroke-width="1.2" fill="none"/></svg>
<svg style="left:497px;top:543.5px" width="7" height="5"><path d="M0.8,0.8 L3.5,3.8 L6.2,0.8" stroke="#ddd" stroke-width="1.3" fill="none"/></svg>
<svg style="left:518px;top:538px" width="19" height="17"><rect x="5" y="0.5" width="13.5" height="16" fill="#1e7a44"/><rect x="11" y="0.5" width="7.5" height="5.3" fill="#32a060"/><rect x="11" y="5.8" width="7.5" height="5.3" fill="#21874b"/><rect x="0.5" y="4" width="10" height="10" fill="#14643a"/><path d="M3,6.5 L8,11.5 M8,6.5 L3,11.5" stroke="#e8f0e8" stroke-width="1.3"/></svg>
<div class="a" style="left:548px;top:531px;width:35px;height:31px;background:rgba(30,110,190,0.5)"></div>
<div class="a" style="left:583px;top:531px;width:1.2px;height:31px;background:#0a1a2a"></div>
<svg style="left:557px;top:538px" width="19" height="17"><rect x="5" y="0.5" width="13.5" height="16" fill="#1a5aaa"/><rect x="5" y="0.5" width="13.5" height="5.3" fill="#3a8ad8"/><rect x="5" y="11" width="13.5" height="5.5" fill="#10408a"/><rect x="0.5" y="4" width="10" height="10" fill="#0e3a80"/><path d="M1.8,6.5 L3.2,11.5 L5.5,7.5 L7.8,11.5 L9.2,6.5" stroke="#e0e8f4" stroke-width="1.1" fill="none"/></svg>
<svg style="left:860px;top:543px" width="10" height="6"><path d="M0.8,5.2 L4.8,1 L8.8,5.2" stroke="#b8bcc0" stroke-width="1.1" fill="none"/></svg>
<svg style="left:876px;top:541px" width="15" height="10"><rect x="4" y="2.5" width="10.5" height="6.5" fill="#a8acb0"/><path d="M1.5,0.5 V3 M4,0.5 V3 M0.5,3 H5 V5.5 L2.8,7 L0.5,5.5 Z" stroke="#a8acb0" stroke-width="0.9" fill="none"/></svg>
<svg style="left:897px;top:541px" width="11" height="11"><path d="M1,10 A9,9 0 0 1 10,1 M3.5,10 A6.5,6.5 0 0 1 10,3.5 M6,10 A4,4 0 0 1 10,6" stroke="#9aa0a4" stroke-width="1" fill="none"/><circle cx="9" cy="9.5" r="1" fill="#c8ccd0"/></svg>
<svg style="left:914.5px;top:541.5px" width="13" height="10"><path d="M0.6,3 H3 L6,0.6 V9.4 L3,7 H0.6 Z" stroke="#b0b4b8" stroke-width="0.9" fill="none"/><path d="M8.3,3 L12,6.8 M12,3 L8.3,6.8" stroke="#b0b4b8" stroke-width="0.9"/></svg>
<svg style="left:937px;top:540px" width="15" height="15"><rect x="5.6" y="0" width="2.8" height="3.5" fill="#f2f2f2" transform="rotate(0 7 7.5)"/><rect x="5.6" y="0" width="2.8" height="3.5" fill="#f2f2f2" transform="rotate(45 7 7.5)"/><rect x="5.6" y="0" width="2.8" height="3.5" fill="#f2f2f2" transform="rotate(90 7 7.5)"/><rect x="5.6" y="0" width="2.8" height="3.5" fill="#f2f2f2" transform="rotate(135 7 7.5)"/><rect x="5.6" y="0" width="2.8" height="3.5" fill="#f2f2f2" transform="rotate(180 7 7.5)"/><rect x="5.6" y="0" width="2.8" height="3.5" fill="#f2f2f2" transform="rotate(225 7 7.5)"/><rect x="5.6" y="0" width="2.8" height="3.5" fill="#f2f2f2" transform="rotate(270 7 7.5)"/><rect x="5.6" y="0" width="2.8" height="3.5" fill="#f2f2f2" transform="rotate(315 7 7.5)"/><circle cx="7" cy="7.5" r="4.8" fill="#f2f2f2"/><circle cx="8.5" cy="7.5" r="1.6" fill="#1a2a2a"/></svg>
<div class="a" style="left:945px;top:541.5px;width:11.5px;height:8.5px;background:#ee1010"></div>
<div class="t" style="left:946.30px;top:543.18px;font-size:6.4px;color:#fff;font-weight:bold;letter-spacing:-0.2px">HD</div>
<div class="a" style="left:967px;top:540px;width:13px;height:14px;background:#8e9294"></div>
<svg style="left:967px;top:540px" width="13" height="14"><path d="M3,0 V4.5 H0 V6.5 H5 V0 Z M8,0 V6.5 H13 V4.5 H10 V0 Z M0,8 V10 H3 V14 H5 V8 Z M8,8 V14 H10 V10 H13 V8 Z" fill="#f4f4f4"/></svg>
<div class="a" style="left:996px;top:531px;width:1px;height:31px;background:#4a5a58"></div>
<div class="a" style="left:0;top:0;width:1000px;height:100px;background:linear-gradient(rgba(0,0,0,0.68) 0%,rgba(0,0,0,0.52) 12%,rgba(0,0,0,0.36) 25%,rgba(0,0,0,0.2) 40%,rgba(0,0,0,0.08) 58%,rgba(0,0,0,0.025) 78%,rgba(0,0,0,0) 100%)"></div>
<div class="a" style="left:0;top:336px;width:1000px;height:226px;background:linear-gradient(rgba(0,0,0,0) 0%,rgba(0,0,0,0.035) 2%,rgba(0,0,0,0.105) 28%,rgba(0,0,0,0.175) 55%,rgba(0,0,0,0.245) 77%,rgba(0,0,0,0.31) 100%)"></div>
<div class="t" style="left:9.00px;top:9.95px;font-size:14px;color:#f4f4f4;letter-spacing:-0.08px;text-shadow:0 0 2px rgba(0,0,0,0.35)">Kurz ArchiMate I. Začiatočník - Ukážka - Nástroje, Framework, Vrstvy, Aspekty, Elementy, MetaModel</div>
<div class="a" style="left:11.0px;top:531.5px;width:80.53px;height:2.8px;background:rgba(190,195,200,0.38)"></div>
<div class="a" style="left:11.0px;top:531.5px;width:80.53px;height:2.8px;background:#ff0000"></div>
<div class="a" style="left:93.13px;top:531.5px;width:79.73px;height:2.8px;background:rgba(190,195,200,0.38)"></div>
<div class="a" style="left:93.13px;top:531.5px;width:79.73px;height:2.8px;background:#ff0000"></div>
<div class="a" style="left:174.46px;top:531.5px;width:79.73px;height:2.8px;background:rgba(190,195,200,0.38)"></div>
<div class="a" style="left:174.46px;top:531.5px;width:79.73px;height:2.8px;background:#ff0000"></div>
<div class="a" style="left:255.79px;top:531.5px;width:79.73px;height:2.8px;background:rgba(190,195,200,0.38)"></div>
<div class="a" style="left:255.79px;top:531.5px;width:79.73px;height:2.8px;background:#ff0000"></div>
<div class="a" style="left:337.12px;top:531.5px;width:79.73px;height:2.8px;background:rgba(190,195,200,0.38)"></div>
<div class="a" style="left:337.12px;top:531.5px;width:79.73px;height:2.8px;background:#ff0000"></div>
<div class="a" style="left:418.45px;top:531.5px;width:79.73px;height:2.8px;background:rgba(190,195,200,0.38)"></div>
<div class="a" style="left:418.45px;top:531.5px;width:79.73px;height:2.8px;background:#ff0000"></div>
<div class="a" style="left:499.78px;top:531.5px;width:79.73px;height:2.8px;background:rgba(190,195,200,0.38)"></div>
<div class="a" style="left:499.78px;top:531.5px;width:6.22px;height:2.8px;background:#ff0000"></div>
<div class="a" style="left:581.11px;top:531.5px;width:79.73px;height:2.8px;background:rgba(190,195,200,0.38)"></div>
<div class="a" style="left:662.44px;top:531.5px;width:79.73px;height:2.8px;background:rgba(190,195,200,0.38)"></div>
<div class="a" style="left:743.77px;top:531.5px;width:79.73px;height:2.8px;background:rgba(190,195,200,0.38)"></div>
<div class="a" style="left:825.1px;top:531.5px;width:79.73px;height:2.8px;background:rgba(190,195,200,0.38)"></div>
<div class="a" style="left:906.43px;top:531.5px;width:80.57px;height:2.8px;background:rgba(190,195,200,0.38)"></div>
<div class="a" style="left:506px;top:531.5px;width:3.5px;height:2.8px;background:rgba(220,220,220,0.8)"></div>
<svg style="left:24.5px;top:539.5px" width="11" height="15"><path d="M0,0 L10.5,7.2 L0,14.5 Z" fill="#fff"/></svg>
<svg style="left:56.5px;top:542px" width="11" height="11"><path d="M0,0 L7,5.4 L0,10.8 Z" fill="#fff"/><rect x="7.7" y="0" width="2.3" height="10.8" fill="#fff"/></svg>
<svg style="left:81.5px;top:539.5px" width="16" height="15"><path d="M0,4.5 H3.5 L8,0.5 V14 L3.5,10 H0 Z" fill="#fff"/><path d="M10,4 A4,4 0 0 1 10,10.5" stroke="#fff" stroke-width="1.6" fill="none"/><path d="M12,1.5 A7,7 0 0 1 12,13" stroke="#fff" stroke-width="1.6" fill="none"/></svg>
<div class="t" style="left:107.60px;top:542.24px;font-size:10.35px;color:#fff;text-shadow:0 0 2px rgba(0,0,0,0.5)">1:00:53 / 2:00:25 • Modely</div>
<svg style="left:231.5px;top:544px" width="5" height="8"><path d="M0.7,0.7 L4,4 L0.7,7.3" stroke="#fff" stroke-width="1.2" fill="none"/></svg>
</body></html>
